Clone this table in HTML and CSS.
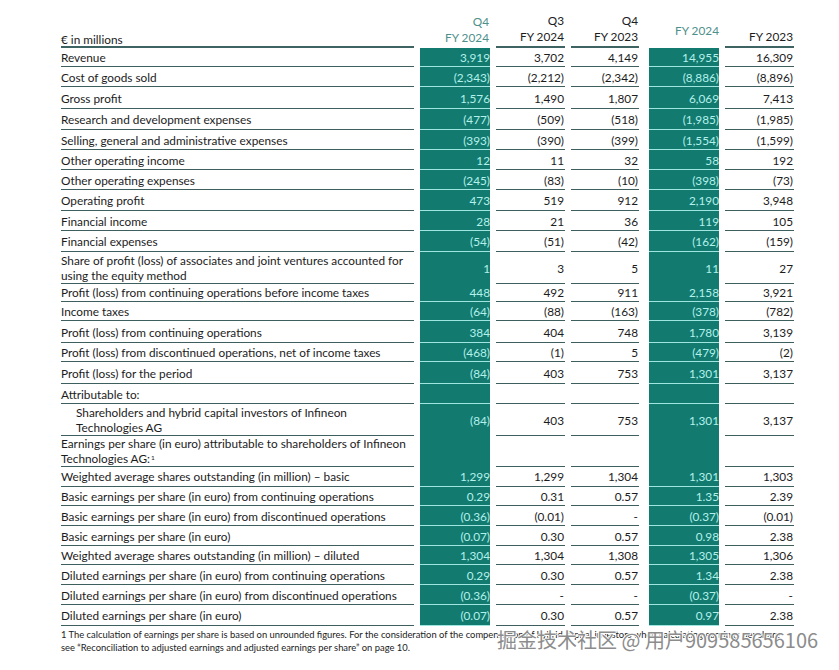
FILE: index.html
```html
<!DOCTYPE html>
<html lang="en">
<head>
<meta charset="utf-8">
<title>Income statement</title>
<link rel="stylesheet" href="styles.css">
</head>
<body>
<div class="page">
  <div class="table">
    <div class="row head">
      <div class="lab">€ in millions</div>
      <div class="num hl">Q4<br>FY 2024</div>
      <div class="num">Q3<br>FY 2024</div>
      <div class="num">Q4<br>FY 2023</div>
      <div class="num hl c4">FY 2024</div>
      <div class="num">FY 2023</div>
    </div>

    <div class="row h19"><div class="lab">Revenue</div><div class="num t">3,919</div><div class="num">3,702</div><div class="num">4,149</div><div class="num t c4">14,955</div><div class="num">16,309</div></div>
    <div class="row h20"><div class="lab">Cost of goods sold</div><div class="num t">(2,343)</div><div class="num">(2,212)</div><div class="num">(2,342)</div><div class="num t c4">(8,886)</div><div class="num">(8,896)</div></div>
    <div class="row h22"><div class="lab">Gross profit</div><div class="num t">1,576</div><div class="num">1,490</div><div class="num">1,807</div><div class="num t c4">6,069</div><div class="num">7,413</div></div>
    <div class="row h21"><div class="lab">Research and development expenses</div><div class="num t">(477)</div><div class="num">(509)</div><div class="num">(518)</div><div class="num t c4">(1,985)</div><div class="num">(1,985)</div></div>
    <div class="row h20"><div class="lab">Selling, general and administrative expenses</div><div class="num t">(393)</div><div class="num">(390)</div><div class="num">(399)</div><div class="num t c4">(1,554)</div><div class="num">(1,599)</div></div>
    <div class="row h20"><div class="lab">Other operating income</div><div class="num t">12</div><div class="num">11</div><div class="num">32</div><div class="num t c4">58</div><div class="num">192</div></div>
    <div class="row h20"><div class="lab">Other operating expenses</div><div class="num t">(245)</div><div class="num">(83)</div><div class="num">(10)</div><div class="num t c4">(398)</div><div class="num">(73)</div></div>
    <div class="row h21"><div class="lab">Operating profit</div><div class="num t">473</div><div class="num">519</div><div class="num">912</div><div class="num t c4">2,190</div><div class="num">3,948</div></div>
    <div class="row h20"><div class="lab">Financial income</div><div class="num t">28</div><div class="num">21</div><div class="num">36</div><div class="num t c4">119</div><div class="num">105</div></div>
    <div class="row h21"><div class="lab">Financial expenses</div><div class="num t">(54)</div><div class="num">(51)</div><div class="num">(42)</div><div class="num t c4">(162)</div><div class="num">(159)</div></div>
    <div class="row h30"><div class="lab"><span>Share of profit (loss) of associates and joint ventures accounted for using the equity method</span></div><div class="num t">1</div><div class="num">3</div><div class="num">5</div><div class="num t c4">11</div><div class="num">27</div></div>
    <div class="row h20"><div class="lab">Profit (loss) from continuing operations before income taxes</div><div class="num t">448</div><div class="num">492</div><div class="num">911</div><div class="num t c4">2,158</div><div class="num">3,921</div></div>
    <div class="row h19"><div class="lab">Income taxes</div><div class="num t">(64)</div><div class="num">(88)</div><div class="num">(163)</div><div class="num t c4">(378)</div><div class="num">(782)</div></div>
    <div class="row h22"><div class="lab">Profit (loss) from continuing operations</div><div class="num t">384</div><div class="num">404</div><div class="num">748</div><div class="num t c4">1,780</div><div class="num">3,139</div></div>
    <div class="row h19"><div class="lab">Profit (loss) from discontinued operations, net of income taxes</div><div class="num t">(468)</div><div class="num">(1)</div><div class="num">5</div><div class="num t c4">(479)</div><div class="num">(2)</div></div>
    <div class="row h22"><div class="lab">Profit (loss) for the period</div><div class="num t">(84)</div><div class="num">403</div><div class="num">753</div><div class="num t c4">1,301</div><div class="num">3,137</div></div>
    <div class="row h20"><div class="lab">Attributable to:</div><div class="num t"></div><div class="num"></div><div class="num"></div><div class="num t c4"></div><div class="num"></div></div>
    <div class="row h31"><div class="lab ind"><span>Shareholders and hybrid capital investors of Infineon Technologies AG</span></div><div class="num t">(84)</div><div class="num">403</div><div class="num">753</div><div class="num t c4">1,301</div><div class="num">3,137</div></div>
    <div class="row h31"><div class="lab"><span>Earnings per share (in euro) attributable to shareholders of Infineon Technologies AG:<sup>1</sup></span></div><div class="num t"></div><div class="num"></div><div class="num"></div><div class="num t c4"></div><div class="num"></div></div>
    <div class="row h21"><div class="lab">Weighted average shares outstanding (in million) – basic</div><div class="num t">1,299</div><div class="num">1,299</div><div class="num">1,304</div><div class="num t c4">1,301</div><div class="num">1,303</div></div>
    <div class="row h19"><div class="lab">Basic earnings per share (in euro) from continuing operations</div><div class="num t">0.29</div><div class="num">0.31</div><div class="num">0.57</div><div class="num t c4">1.35</div><div class="num">2.39</div></div>
    <div class="row h20"><div class="lab">Basic earnings per share (in euro) from discontinued operations</div><div class="num t">(0.36)</div><div class="num">(0.01)</div><div class="num">-</div><div class="num t c4">(0.37)</div><div class="num">(0.01)</div></div>
    <div class="row h20"><div class="lab">Basic earnings per share (in euro)</div><div class="num t">(0.07)</div><div class="num">0.30</div><div class="num">0.57</div><div class="num t c4">0.98</div><div class="num">2.38</div></div>
    <div class="row h19"><div class="lab">Weighted average shares outstanding (in million) – diluted</div><div class="num t">1,304</div><div class="num">1,304</div><div class="num">1,308</div><div class="num t c4">1,305</div><div class="num">1,306</div></div>
    <div class="row h20"><div class="lab">Diluted earnings per share (in euro) from continuing operations</div><div class="num t">0.29</div><div class="num">0.30</div><div class="num">0.57</div><div class="num t c4">1.34</div><div class="num">2.38</div></div>
    <div class="row h20"><div class="lab">Diluted earnings per share (in euro) from discontinued operations</div><div class="num t">(0.36)</div><div class="num">-</div><div class="num">-</div><div class="num t c4">(0.37)</div><div class="num">-</div></div>
    <div class="row h21"><div class="lab">Diluted earnings per share (in euro)</div><div class="num t">(0.07)</div><div class="num">0.30</div><div class="num">0.57</div><div class="num t c4">0.97</div><div class="num">2.38</div></div>
  </div>
  <p class="note">1 The calculation of earnings per share is based on unrounded figures. For the consideration of the compensation of hybrid capital investors when calculating earnings per share<br>see “Reconciliation to adjusted earnings and adjusted earnings per share” on page 10.</p>
  <div class="watermark">掘金技术社区 @ 用户909585656106</div>
</div>
</body>
</html>
```

FILE: styles.css
```css
* { box-sizing: border-box; }
html, body { margin: 0; padding: 0; background: #fff; }
body {
  font-family: Lato, "Liberation Sans", sans-serif;
  font-size: 11.8px;
  color: #1c1c1c;
  width: 839px;
  height: 670px;
  overflow: hidden;
}
.page { position: relative; padding: 12px 0 0 61px; }

.row {
  display: grid;
  grid-template-columns: 353px 70px 69px 68px 74px 69px;
  column-gap: 6px;
  width: 733px;
}
.row > div {
  border-bottom: 1px solid #3d5f5d;
  display: flex;
  align-items: center;
  line-height: 15px;
  padding-top: 1px;
}
.lab { padding-right: 4px; }
.ind { padding-left: 15px; }
.num { justify-content: flex-end; text-align: right; padding-right: 1px; white-space: nowrap; }
.c4 { margin-left: 4px; }
.t {
  background: #137a6f;
  color: #b2f1ec;
  border-bottom-color: #9ee6df !important;
  padding-right: 0;
  overflow: hidden;
}

.head { height: 36px; }
.head > div { align-items: flex-end; border-bottom: 2px solid #3d6462; padding: 0 0 1px; line-height: 16px; }
.head .num { padding-right: 1px; }
.head .lab { padding-bottom: 0; line-height: 13px; }
.head .hl { color: #4e908b; border-bottom: 0; padding-bottom: 2px; }
.head .c4 { align-items: center; padding: 2px 0 0; }

.h19 { height: 19px; }
.h20 { height: 20px; }
.h21 { height: 21px; }
.h22 { height: 22px; }
.h30 { height: 30px; }
.h31 { height: 31px; }

sup { font-size: 6.5px; line-height: 0; vertical-align: 3px; margin-left: 1px; }

.note {
  margin: 2px 0 0;
  font-size: 9.4px;
  line-height: 13px;
  color: #222;
  white-space: nowrap;
}

.watermark {
  position: absolute;
  left: 497px;
  top: 625px;
  font-family: "Noto Sans CJK SC", "Noto Sans", sans-serif;
  font-size: 20px;
  color: #8c8c8c;
  text-shadow: 1px 0 0 #fff, -1px 0 0 #fff, 0 1px 0 #fff, 0 -1px 0 #fff;
  white-space: nowrap;
}
```
